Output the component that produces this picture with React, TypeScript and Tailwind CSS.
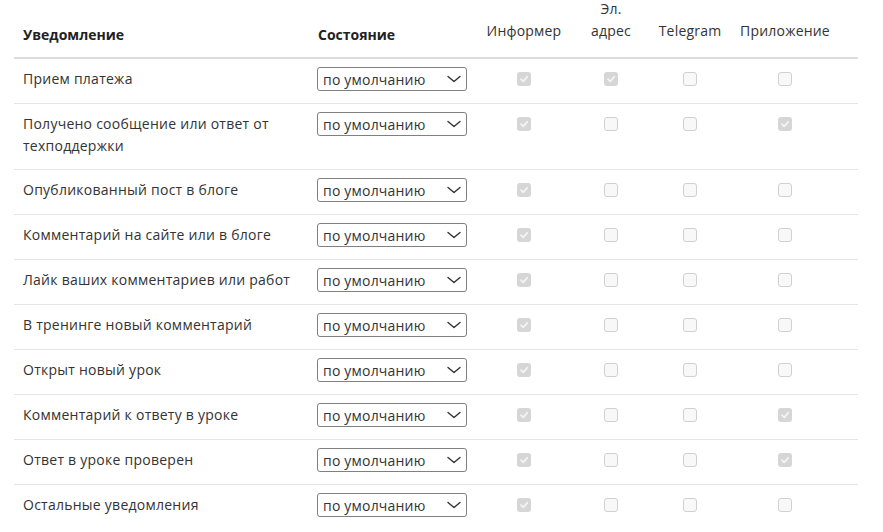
const rows: { title: string; flags: boolean[] }[] = [
  { title: 'Прием платежа', flags: [true, true, false, false] },
  { title: 'Получено сообщение или ответ от техподдержки', flags: [true, false, false, true] },
  { title: 'Опубликованный пост в блоге', flags: [true, false, false, false] },
  { title: 'Комментарий на сайте или в блоге', flags: [true, false, false, false] },
  { title: 'Лайк ваших комментариев или работ', flags: [true, false, false, false] },
  { title: 'В тренинге новый комментарий', flags: [true, false, false, false] },
  { title: 'Открыт новый урок', flags: [true, false, false, false] },
  { title: 'Комментарий к ответу в уроке', flags: [true, false, false, true] },
  { title: 'Ответ в уроке проверен', flags: [true, false, false, true] },
  { title: 'Остальные уведомления', flags: [true, false, false, false] },
];

const grid = 'grid grid-cols-[294px_168px_96px_78px_80px_110px_18px]';

function Checkbox({ checked }: { checked: boolean }) {
  if (checked) {
    return (
      <div className="w-[14px] h-[14px] rounded-[3px] bg-[#d6d6d6] flex items-center justify-center">
        <svg width="10" height="10" viewBox="0 0 10 10" fill="none">
          <path d="M2 5.2 L4.2 7.3 L8.2 2.8" stroke="#f4f4f4" strokeWidth="1.8" strokeLinecap="round" strokeLinejoin="round" />
        </svg>
      </div>
    );
  }
  return <div className="w-[14px] h-[14px] rounded-[3px] border border-[#d0d0d0] bg-[#f8f8f8]" />;
}

function Select() {
  return (
    <div className="w-[150px] h-[24px] border border-[#808080] rounded-[3px] bg-white flex items-center justify-between pl-[5px] pr-[4px] text-[14px] tracking-[0.2px] text-[#333]">
      <span>по умолчанию</span>
      <svg width="16" height="10" viewBox="0 0 16 10" fill="none">
        <path d="M2 2.5 L8 7.5 L14 2.5" stroke="#333" strokeWidth="1.4" strokeLinecap="round" strokeLinejoin="round" />
      </svg>
    </div>
  );
}

export default function App() {
  return (
    <div className="bg-white w-[883px] h-[532px] overflow-hidden text-[#333] font-['Open_Sans','Noto_Sans',sans-serif]">
      <div className="ml-[14px] w-[844px]">
        {/* Header */}
        <div className={`${grid} h-[59px] border-b-2 border-[#dcdcdc]`}>
          <div className="pl-[9px] pt-[24px] leading-[22px] text-[14px] font-bold text-[#222]">Уведомление</div>
          <div className="pl-[10px] pt-[24px] leading-[22px] text-[14px] font-bold text-[#222]">Состояние</div>
          <div className="pt-[19px] leading-[23px] text-[14px] tracking-[0.2px] text-center">Информер</div>
          <div className="pt-[1px] text-[14px] tracking-[0.2px] text-center">
            <div className="leading-[16px]">Эл.</div>
            <div className="pt-[2px] leading-[23px]">адрес</div>
          </div>
          <div className="pt-[19px] leading-[23px] text-[14px] tracking-[0.2px] text-center">Telegram</div>
          <div className="pt-[19px] leading-[23px] text-[14px] tracking-[0.2px] text-center">Приложение</div>
          <div />
        </div>

        {/* Rows */}
        {rows.map((row, i) => (
          <div key={i} className={`${grid} pt-[8px] pb-[12px] ${i > 0 ? 'border-t border-[#e6e6e6]' : ''}`}>
            <div className="pl-[9px] pr-[10px] pt-[1px] leading-[22px] text-[14px] tracking-[0.25px]">{row.title}</div>
            <div className="pl-[9px]">
              <Select />
            </div>
            {row.flags.map((f, j) => (
              <div key={j} className="h-[24px] flex items-center justify-center">
                <Checkbox checked={f} />
              </div>
            ))}
            <div />
          </div>
        ))}
      </div>
    </div>
  );
}
